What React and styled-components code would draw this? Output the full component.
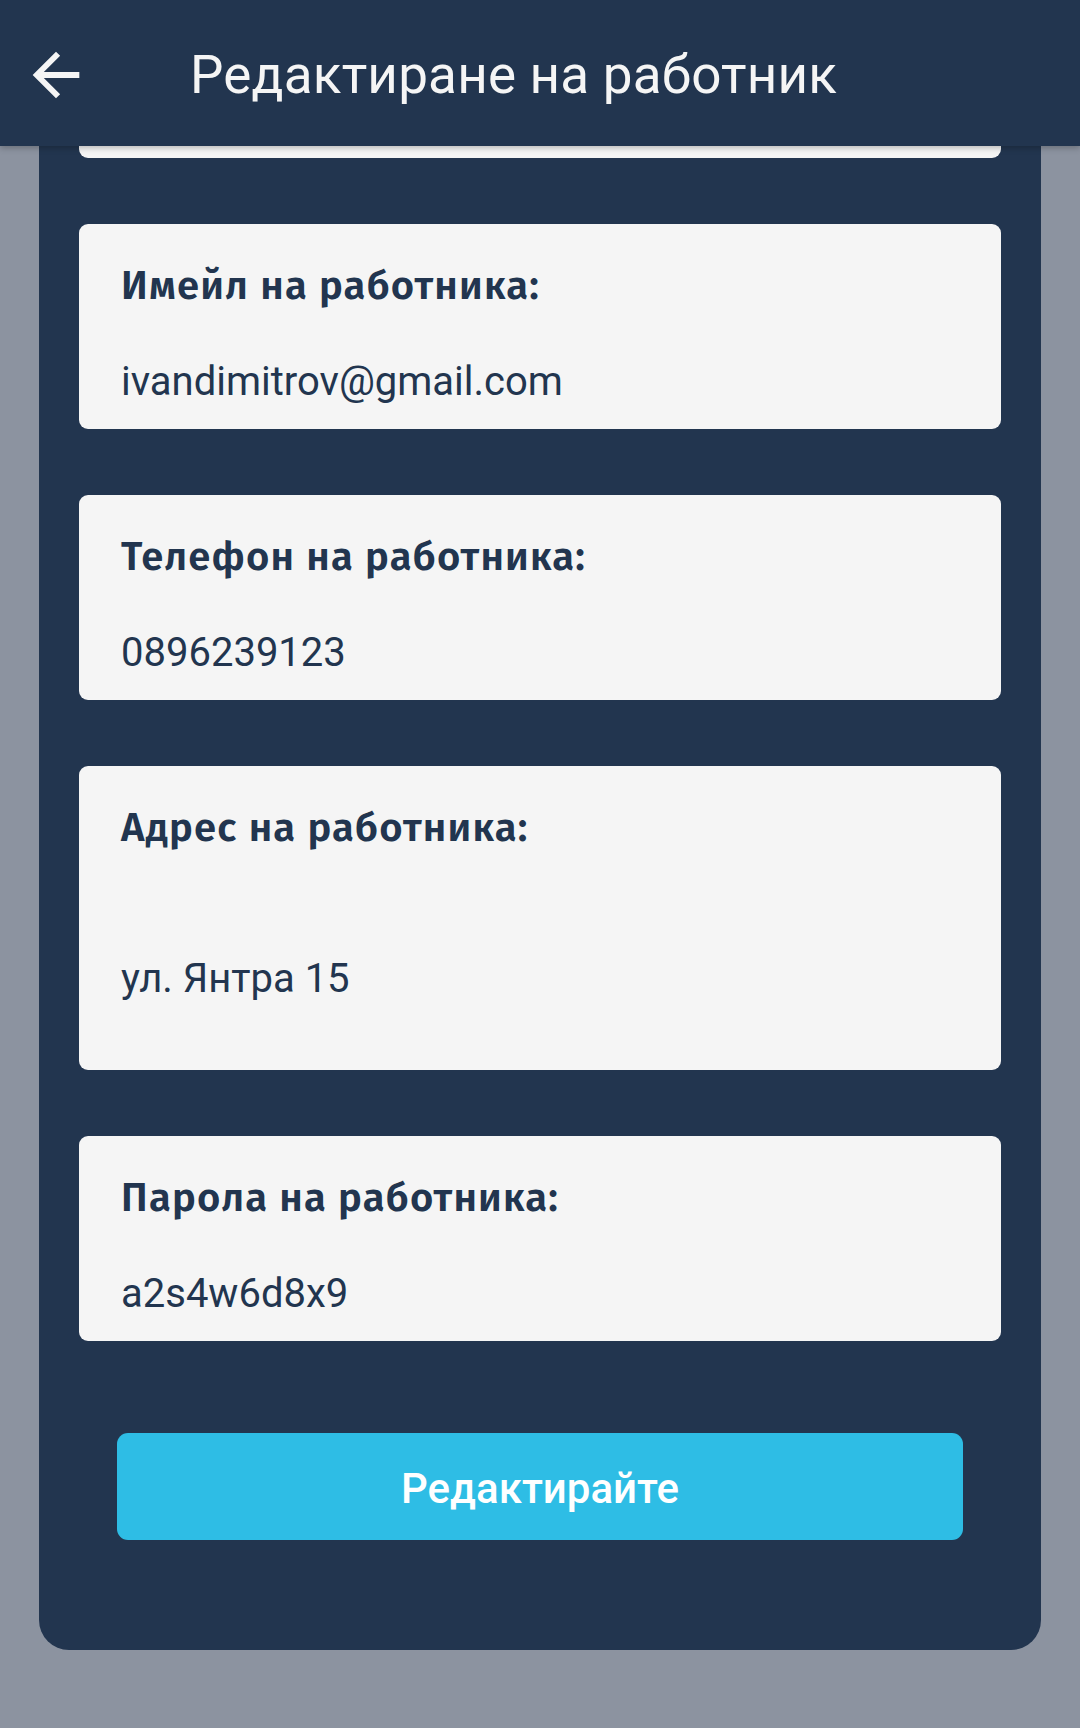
import { useLayoutEffect, useRef } from "react";
import styled, { createGlobalStyle } from "styled-components";

const GlobalStyle = createGlobalStyle`
  * {
    box-sizing: border-box;
  }
  html, body {
    margin: 0;
    padding: 0;
    background: #8c93a0;
    font-family: Roboto, "Noto Sans", sans-serif;
  }
`;

const Screen = styled.div`
  width: 1080px;
  height: 1728px;
  display: flex;
  flex-direction: column;
  background: #8c93a0;
  overflow: hidden;
`;

const Header = styled.header`
  position: relative;
  z-index: 2;
  flex: 0 0 146px;
  display: flex;
  align-items: center;
  background: #22354f;
  box-shadow: 0 2px 6px rgba(0, 0, 0, 0.25);
`;

const BackButton = styled.button`
  width: 70px;
  height: 70px;
  margin-left: 21px;
  margin-top: 4px;
  padding: 0;
  border: 0;
  background: none;
  color: #f5f5f5;
  display: flex;
  align-items: center;
  justify-content: center;
`;

const Title = styled.h1`
  margin: 4px 0 0 99px;
  font-size: 53px;
  font-weight: 400;
  line-height: 70px;
  color: #f5f5f5;
  letter-spacing: 0.2px;
`;

const ScrollArea = styled.div`
  flex: 1;
  overflow-y: auto;
  scrollbar-width: none;
  &::-webkit-scrollbar {
    display: none;
  }
`;

const Panel = styled.div`
  margin: 40px 39px 78px;
  padding: 40px 40px 110px;
  background: #22354f;
  border-radius: 30px;
  display: flex;
  flex-direction: column;
  gap: 66px;
`;

const Card = styled.div`
  background: #f5f5f5;
  border-radius: 9px;
  padding: 37px 42px 0;
  display: flex;
  flex-direction: column;
`;

const Label = styled.div`
  font-family: "Fira Sans", "Open Sans", sans-serif;
  font-size: 40px;
  font-weight: 600;
  letter-spacing: 1.2px;
  line-height: 50px;
  color: #22354f;
`;

const Value = styled.div`
  margin-top: 23px;
  height: ${(props) => (props.$tall ? "194px" : "95px")};
  padding-top: ${(props) => (props.$tall ? "10px" : "0")};
  display: flex;
  align-items: center;
  font-size: 40px;
  color: #22354f;
`;

const SubmitButton = styled.button`
  margin: 26px 38px 0;
  height: 107px;
  border: 0;
  border-radius: 11px;
  background: #2ebde5;
  color: #ffffff;
  font-family: Roboto, sans-serif;
  font-size: 42px;
  font-weight: 500;
  padding-top: 4px;
`;

const fields = [
  { label: "Име на работника:", value: "Иван Димитров" },
  { label: "Имейл на работника:", value: "ivandimitrov@gmail.com" },
  { label: "Телефон на работника:", value: "0896239123" },
  { label: "Адрес на работника:", value: "ул. Янтра 15", tall: true },
  { label: "Парола на работника:", value: "a2s4w6d8x9" },
];

const BackIcon = () => (
  <svg width="70" height="70" viewBox="0 0 24 24" fill="currentColor">
    <path d="M20 11H7.83l5.59-5.59L12 4l-8 8 8 8 1.41-1.41L7.83 13H20v-2z" />
  </svg>
);

export default function App() {
  const scrollRef = useRef(null);

  useLayoutEffect(() => {
    // screen is shown scrolled to the bottom of the form
    if (scrollRef.current) {
      scrollRef.current.scrollTop = scrollRef.current.scrollHeight;
    }
  }, []);

  return (
    <>
      <GlobalStyle />
      <Screen>
        <Header>
          <BackButton aria-label="Назад">
            <BackIcon />
          </BackButton>
          <Title>Редактиране на работник</Title>
        </Header>
        <ScrollArea ref={scrollRef}>
          <Panel>
            {fields.map((field) => (
              <Card key={field.label}>
                <Label>{field.label}</Label>
                <Value $tall={field.tall}>{field.value}</Value>
              </Card>
            ))}
            <SubmitButton>Редактирайте</SubmitButton>
          </Panel>
        </ScrollArea>
      </Screen>
    </>
  );
}
